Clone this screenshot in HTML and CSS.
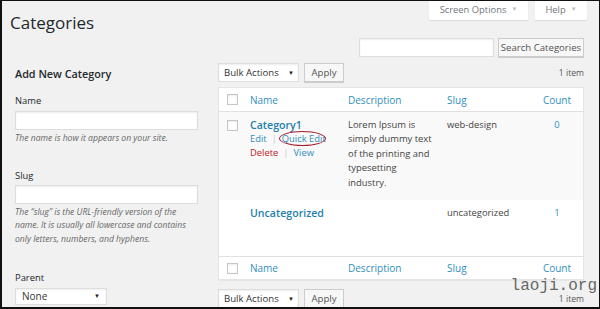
FILE: index.html
```html
<!DOCTYPE html>
<html>
<head>
<meta charset="utf-8">
<link rel="stylesheet" href="styles.css">
</head>
<body>
<div class="page">
  <div class="top">
    <h1 class="title">Categories</h1>
    <div class="tabs">
      <div class="tab tab-screen">Screen Options <span class="caret">▼</span></div>
      <div class="tab tab-help">Help <span class="caret">▼</span></div>
    </div>
  </div>
  <div class="search-row">
    <div class="input search-input"></div>
    <div class="button search-btn">Search Categories</div>
  </div>
  <div class="main">
    <div class="left">
      <h3 class="form-title">Add New Category</h3>
      <div class="field field-name">
        <div class="label">Name</div>
        <div class="input text-input"></div>
        <p class="help">The name is how it appears on your site.</p>
      </div>
      <div class="field field-slug">
        <div class="label">Slug</div>
        <div class="input text-input"></div>
        <p class="help">The “slug” is the URL-friendly version of the name. It is usually all lowercase and contains only letters, numbers, and hyphens.</p>
      </div>
      <div class="field field-parent">
        <div class="label">Parent</div>
        <div class="select parent-select"><span>None</span><span class="sel-caret">▼</span></div>
      </div>
    </div>
    <div class="right">
      <div class="tablenav">
        <div class="select bulk"><span>Bulk Actions</span><span class="sel-caret">▼</span></div>
        <div class="button apply">Apply</div>
        <div class="count-items">1 item</div>
      </div>
      <div class="table">
        <div class="row head">
          <div class="c cb"><span class="checkbox"></span></div>
          <div class="c name link">Name</div>
          <div class="c desc link">Description</div>
          <div class="c slug link">Slug</div>
          <div class="c count link">Count</div>
        </div>
        <div class="row r1">
          <div class="c cb"><span class="checkbox"></span></div>
          <div class="c name">
            <div class="row-title">Category1</div>
            <div class="actions"><span class="link">Edit</span><span class="sep">|</span><span class="link qe">Quick Edit<span class="ring"></span></span></div>
            <div class="actions"><span class="del">Delete</span><span class="sep">|</span><span class="link">View</span></div>
          </div>
          <div class="c desc text">Lorem Ipsum is simply dummy text of the printing and typesetting industry.</div>
          <div class="c slug text">web-design</div>
          <div class="c count link">0</div>
        </div>
        <div class="row r2">
          <div class="c cb"></div>
          <div class="c name"><div class="row-title">Uncategorized</div></div>
          <div class="c desc text"></div>
          <div class="c slug text">uncategorized</div>
          <div class="c count link">1</div>
        </div>
        <div class="row foot">
          <div class="c cb"><span class="checkbox"></span></div>
          <div class="c name link">Name</div>
          <div class="c desc link">Description</div>
          <div class="c slug link">Slug</div>
          <div class="c count link">Count</div>
        </div>
      </div>
      <div class="tablenav bottom">
        <div class="select bulk"><span>Bulk Actions</span><span class="sel-caret">▼</span></div>
        <div class="button apply">Apply</div>
        <div class="count-items">1 item</div>
      </div>
    </div>
  </div>
  <div class="watermark">laoji.org</div>
</div>
</body>
</html>
```
FILE: styles.css
```css
html, body {
  margin: 0;
  padding: 0;
  background: #000;
}
.page {
  position: relative;
  width: 600px;
  height: 309px;
  box-sizing: border-box;
  border-style: solid;
  border-color: #111;
  border-width: 1px 1px 2px 2px;
  background: #f1f1f1;
  overflow: hidden;
  font-family: "Open Sans", "Liberation Sans", sans-serif;
  font-size: 9.4px;
  color: #444;
}
.top {
  display: flex;
  align-items: flex-start;
  height: 36px;
}
.title {
  margin: 10px 0 0 8px;
  font-size: 17px;
  font-weight: 400;
  line-height: 24px;
  color: #23282d;
}
.tabs {
  margin-left: auto;
  margin-right: 12px;
  display: flex;
  gap: 7px;
  margin-top: -1px;
}
.tab {
  height: 20px;
  background: #fff;
  box-shadow: 0 1px 1px rgba(0,0,0,0.08);
  color: #72777c;
  font-size: 9.4px;
  display: flex;
  align-items: center;
  justify-content: center;
  box-sizing: border-box;
  padding-bottom: 2px;
}
.tab-screen { width: 99px; }
.tab-help { width: 52px; }
.caret {
  font-size: 6px;
  color: #bbb;
  margin-left: 5px;
}
.search-row {
  display: flex;
  justify-content: flex-end;
  gap: 4px;
  margin-right: 15px;
  margin-top: 1px;
  height: 19px;
}
.input {
  background: #fff;
  border: 1px solid #ddd;
  box-shadow: inset 0 1px 2px rgba(0,0,0,0.07);
  box-sizing: border-box;
}
.search-input { width: 135px; height: 19px; }
.button {
  background: #f7f7f7;
  border: 1px solid #ccc;
  box-shadow: 0 1px 0 #ccc;
  color: #555;
  box-sizing: border-box;
  display: flex;
  align-items: center;
  justify-content: center;
  font-size: 9.6px;
  height: 19px;
}
.search-btn { width: 86px; }
.main {
  display: grid;
  grid-template-columns: 216px 366px;
  margin-top: 6px;
}
.left {
  padding-left: 13px;
  width: 183px;
}
.form-title {
  margin: 4px 0 0 0;
  font-size: 10.8px;
  font-weight: 600;
  line-height: 14px;
  color: #23282d;
}
.label {
  color: #23282d;
  font-size: 9.4px;
  line-height: 12px;
}
.field-name { margin-top: 14px; }
.field-name .label { margin-bottom: 4px; }
.text-input { width: 183px; height: 19px; }
.help {
  margin: 2px 0 0 0;
  font-style: italic;
  color: #666;
  font-size: 8.6px;
  line-height: 13.7px;
}
.field-slug { margin-top: 24px; }
.field-slug .label { margin-bottom: 3px; }
.field-parent { margin-top: 25px; }
.field-parent .label { margin-bottom: 4px; }
.select {
  background: #fff;
  border: 1px solid #ddd;
  box-shadow: inset 0 1px 2px rgba(0,0,0,0.07);
  box-sizing: border-box;
  display: flex;
  align-items: center;
  justify-content: space-between;
  padding: 0 6px;
  color: #333;
}
.parent-select { width: 92px; height: 17px; font-size: 10px; }
.sel-caret { font-size: 6px; color: #222; }
.right {
  display: flex;
  flex-direction: column;
}
.tablenav {
  display: flex;
  align-items: center;
  gap: 5px;
  height: 19px;
  margin-top: 0px;
}
.bulk { width: 81px; height: 19px; font-size: 9.6px; padding: 0 4px 0 5px; }
.apply { width: 40px; }
.count-items {
  margin-left: auto;
  color: #555;
  font-size: 8.6px;
}
.table {
  margin-top: 5px;
  background: #fff;
  border: 1px solid #e5e5e5;
  box-shadow: 0 1px 1px rgba(0,0,0,0.04);
}
.row {
  display: grid;
  grid-template-columns: 23px 98px 99px 92px 1fr;
}
.head {
  height: 24px;
  border-bottom: 1px solid #e1e1e1;
  align-items: center;
  box-sizing: border-box;
}
.foot {
  height: 23px;
  border-top: 1px solid #e1e1e1;
  align-items: center;
  box-sizing: border-box;
}
.head .c, .foot .c { font-size: 10px; }
.c { padding-left: 8px; box-sizing: border-box; }
.desc { padding-right: 4px; }
.cb { padding-left: 8px; display: flex; align-items: center; }
.checkbox {
  display: block;
  width: 11px;
  height: 11px;
  border: 1px solid #c3c6c9;
  background: #fff;
  box-sizing: border-box;
  box-shadow: inset 0 1px 2px rgba(0,0,0,0.08);
}
.count { padding-left: 0; text-align: center; }
.link { color: #2f8fbe; }
.r1 {
  background: #f9f9f9;
  height: 88px;
  padding-top: 6px;
  box-sizing: border-box;
}
.r1 .cb { align-items: flex-start; padding-top: 2px; }
.r2 {
  height: 56px;
  padding-top: 6px;
  box-sizing: border-box;
}
.row-title {
  color: #1f7eaa;
  font-weight: 600;
  font-size: 10.6px;
  line-height: 14px;
}
.actions {
  line-height: 14px;
  font-size: 9.4px;
}
.sep { color: #ccc; margin: 0 5px; }
.del { color: #b22; }
.qe { position: relative; }
.ring {
  position: absolute;
  left: -3px;
  top: -1px;
  width: 47px;
  height: 15px;
  border: 1.5px solid #a31e2a;
  border-radius: 50%;
  box-sizing: border-box;
}
.text {
  color: #444;
  line-height: 14.4px;
}
.r1 .count, .r2 .count { line-height: 14px; }
.bottom { margin-top: 9px; }
.watermark {
  position: absolute;
  right: 2px;
  top: 276px;
  font-family: "Liberation Mono", "DejaVu Sans Mono", monospace;
  font-size: 16px;
  color: #666;
}
```
